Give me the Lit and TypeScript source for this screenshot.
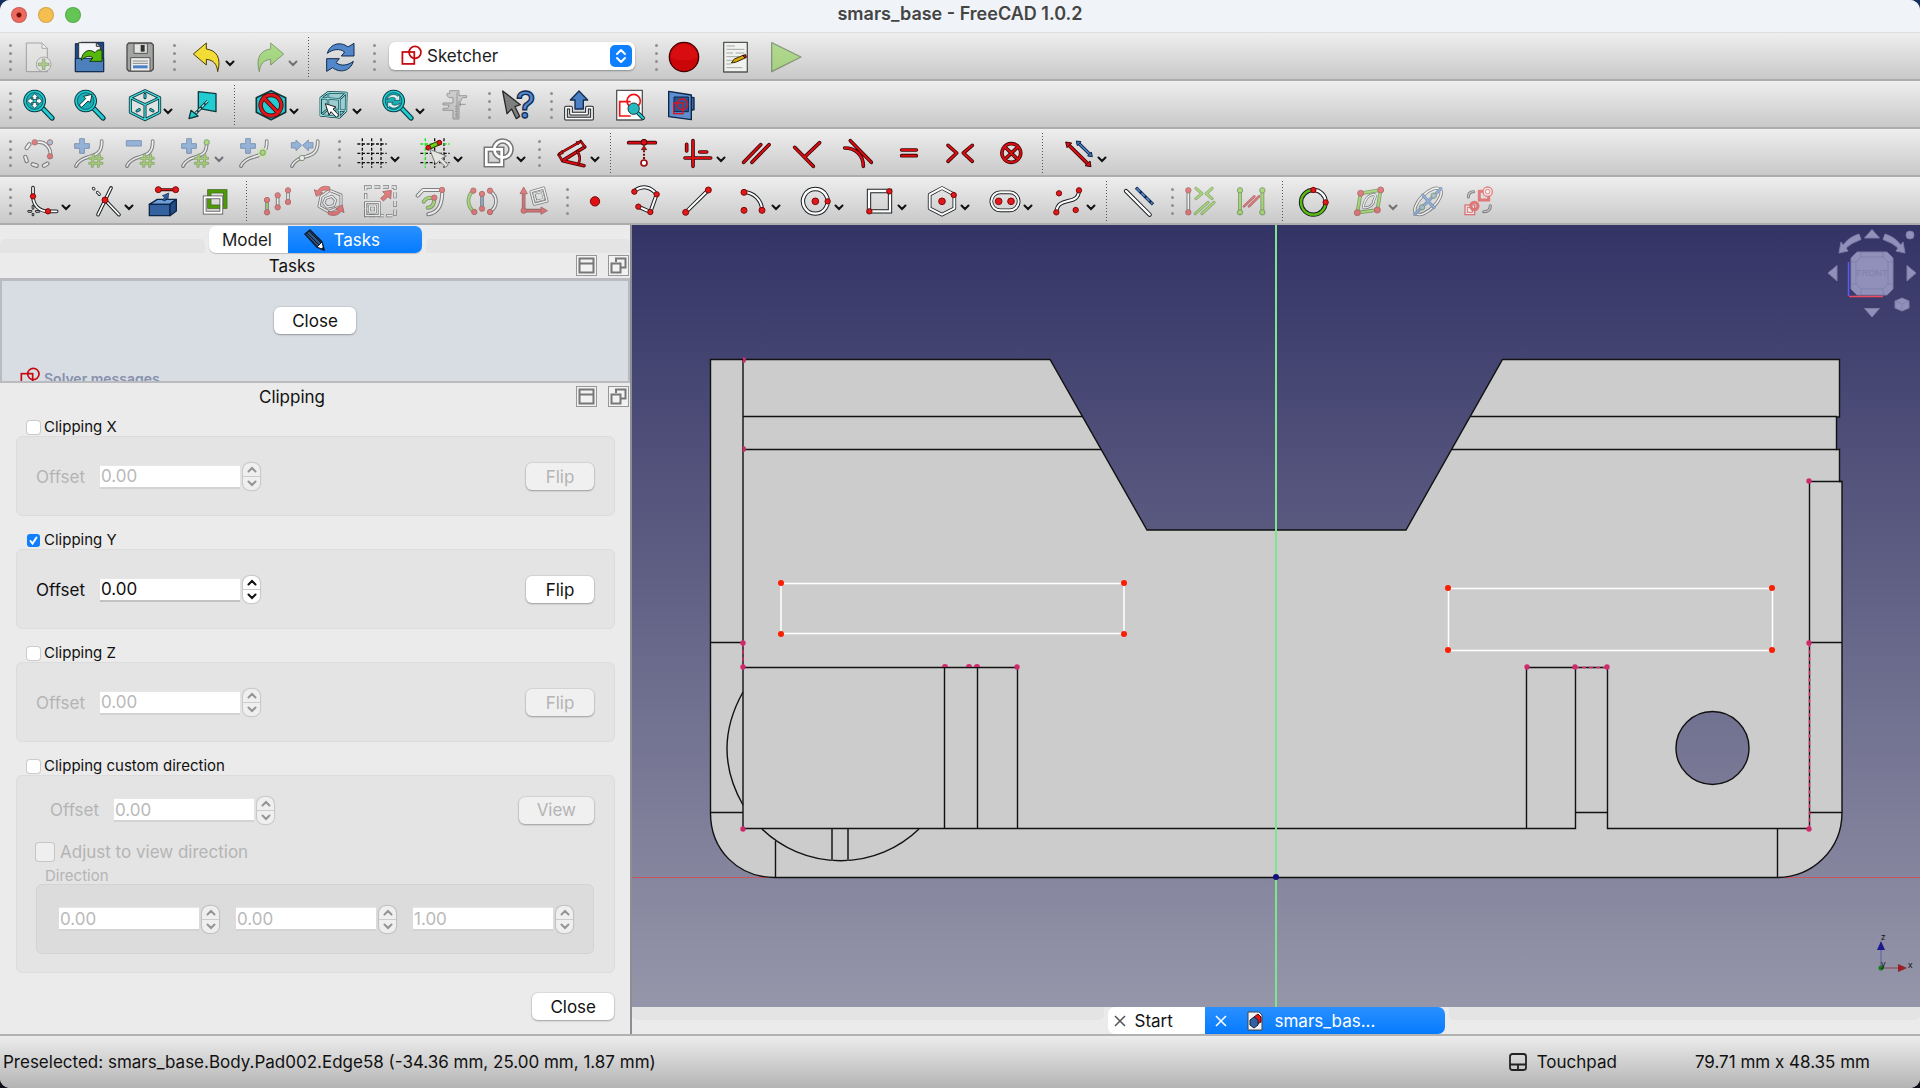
import { LitElement, html, svg, css, nothing, type TemplateResult } from "lit";
import { customElement, property } from "lit/decorators.js";

type Art = TemplateResult | TemplateResult[];

const RED = "#e3181b";
const GREEN = "#73d216";
const BLUE = "#4a86cf";
const TEAL = "#1fcdd3";
const INK = "#1b2023";

/* Outlined stroke: a dark line with a lighter core. */
const tube = (d: string, core = "#fff", w = 11, inner = 5, ink = INK) => svg`
  <path d=${d} fill="none" stroke=${ink} stroke-width=${w} stroke-linecap="round" stroke-linejoin="round"/>
  <path d=${d} fill="none" stroke=${core} stroke-width=${inner} stroke-linecap="round" stroke-linejoin="round"/>`;
const shape = (d: string, fill: string, ink = INK, w = 3) =>
  svg`<path d=${d} fill=${fill} stroke=${ink} stroke-width=${w} stroke-linejoin="round"/>`;
const dot = (x: number, y: number, fill = RED, r = 8) =>
  svg`<circle cx=${x} cy=${y} r=${r} fill=${fill} stroke="#7c0a0a" stroke-width="3"/>`;
const gdot = (x: number, y: number, fill = GREEN, r = 8) =>
  svg`<circle cx=${x} cy=${y} r=${r} fill=${fill} stroke="#2c5a10" stroke-width="3"/>`;
const bar = (d: string, core = "#dc0d12") => tube(d, core, 11, 6, "#3a0606");
const HEX = "M48 5L92 26V70L48 92L4 70V26Z";

const lens = (inner: Art) => svg`
  ${tube("M64 60L90 87", TEAL, 16, 9, "#0d3b40")}
  ${tube("M38 8A28 28 0 1 1 37.900 8Z", TEAL, 12, 6, "#0d3b40")}
  <circle cx="38" cy="36" r="25" fill="#19aeb6" stroke="#0d5157" stroke-width="2"/>
  ${inner}`;
const plus = (x: number, y: number) =>
  shape(`M${x - 7} ${y - 22}h14v15h15v14h-15v15h-14v-15h-15v-14h15z`, BLUE, "#204a87");
const hash = (x: number, y: number) =>
  tube(`M${x - 8} ${y - 17}L${x - 11} ${y + 17}M${x + 10} ${y - 17}L${x + 7} ${y + 17}M${x - 19} ${y - 7}H${x + 18}M${x - 19} ${y + 8}H${x + 18}`, "#73c020", 9, 5, "#3d6b12");
const curve = () => tube("M86 12C88 50 66 54 46 60S14 74 9 87", "#fff");
const grid = (first = "#111") => svg`
  <g fill="none" stroke="#111" stroke-width="4" stroke-dasharray="9 5">
    <path d="M47 4V92M75 4V92M4 49H92M4 77H92"/>
    <path d="M19 4V92M4 21H92" stroke=${first}/>
  </g>`;
const sketchMark = svg`
  <g fill="none" stroke="#c8070c" stroke-width="5">
    <rect x="4" y="20" width="34" height="34"/><circle cx="40" cy="21" r="17"/>
  </g>`;

const ICONS: Record<string, Art> = {
  newDoc: svg`${shape("M13 6H60L76 22V92H13Z", "#e8e9e6", "#666")}${shape("M60 6V22H76Z", "#fff", "#777")}
    <circle cx="65" cy="70" r="22" fill="#eee" stroke="#777" stroke-width="3"/>${shape("M61 54h8v12h12v8h-12v12h-8v-12h-12v-8h12z", "#8ac04a", "#3d6b12", 2)}`,
  open: svg`${shape("M7 8H24V4H92V92H7Z", "#204a87", "#0d2547")}${shape("M17 5H70L82 16V56H17Z", "#f3f5f8", "#333")}
    ${shape("M70 5V16H82Z", "#cfd3d8", "#333")}
    ${shape("M7 52H92V92H7Z", "#4c80bd", "#0d2547")}${shape("M25 58C27 32 48 20 66 35L74 27H87V61H50L60 51C50 42 36 46 25 58Z", "#57b80c", "#173b04")}`,
  save: svg`${shape("M14 6H82L88 12V84L82 90H14L9 84V12Z", "#a3a5a2", "#4c4e4c", 4)}${shape("M30 8H70V37H30Z", "#e4e4e2", "#555")}<rect x="50" y="12" width="12" height="20" fill="#333"/>
    ${shape("M20 50H78V90H20Z", "#eceeec", "#555")}<path d="M26 60H72M26 67H72" stroke="#888" stroke-width="3"/><rect x="27" y="73" width="44" height="9" fill="#4c80c9"/>`,
  undo: shape("M7 39L46 6V24C76 28 92 50 80 92C78 70 68 57 46 55V72Z", "#f2dc35", "#4a3f05"),
  redo: shape("M89 39L50 6V24C20 28 4 50 16 92C18 70 28 57 50 55V72Z", "#73d22c", "#2c5a10"),
  refresh: svg`${shape("M10 37C18 8 50 0 72 18L90 7V45H52L62 33C46 21 26 25 10 37Z", "#5288c9", "#122b50")}
    <g transform="rotate(180 49 49)">${shape("M10 37C18 8 50 0 72 18L90 7V45H52L62 33C46 21 26 25 10 37Z", "#5288c9", "#122b50")}</g>`,
  record: svg`<circle cx="48" cy="48" r="44" fill="#cb0609" stroke="#400" stroke-width="4"/><path d="M8 50A40 40 0 0 1 88 50Q48 66 8 50Z" fill="#e01216" opacity=".6"/>`,
  macro: svg`${shape("M14 4H85V93H14Z", "#f0f2ef", "#555853", 4)}<path d="M22 15H48M22 25H76M22 36H42M50 36H76M22 47H60M22 58H46M22 69H36M22 80H70" stroke="#a5a8a3" stroke-width="3"/>
    ${shape("M37 66L46 54L72 43L78 51L52 63Z", "#d9a90c", "#332600")}${shape("M72 43L80 41L82 49L78 51Z", "#d2362b", "#300")}`,
  play: shape("M5 5L93 48L5 92Z", "#7ed13a", "#38561f", 4),
  zoomFit: lens(svg`${shape("M38 14L48 25H43V31H49V26L60 36L49 46V41H43V47H48L38 58L28 47H33V41H27V46L16 36L27 26V31H33V25H28Z", "#fff", "#12363a", 2)}<rect x="33" y="31" width="10" height="10" fill=${TEAL} stroke="#12363a" stroke-width="2"/>`),
  zoomSel: lens(shape("M19 48L38 29L32 22L57 16L52 41L45 36L26 55Z", "#fff", "#12363a")),
  iso: svg`${shape(HEX, "#dde3e3", "#12363a")}${tube(`${HEX}M6 27L48 47L90 27M48 47V90`, "#3ed7dc", 9, 4, "#12363a")}
    ${tube("M48 16V26M24 66L31 62M65 62L72 66", TEAL, 9, 4, "#12363a")}`,
  align: svg`${shape("M34 8L87 14V68L34 58Z", TEAL, "#12363a", 4)}<path d="M62 36L26 73" stroke="#12363a" stroke-width="9"/><path d="M62 36L26 73" stroke="#8fe9eb" stroke-width="4" stroke-dasharray="10 5"/>${shape("M6 89L12 64L33 81Z", TEAL, "#12363a", 4)}`,
  drawStyle: svg`${shape(HEX, TEAL, "#12363a", 5)}${tube("M48 18A31 31 0 1 1 47.900 18ZM26 26L70 72", "#dc161b", 13, 9, "#380404")}`,
  boxSel: svg`${shape("M8 27L30 9L86 11L84 66L64 86L8 80Z", "#9ccdd0", "#12363a", 4)}${tube("M8 27L30 10L85 12L84 66L64 85L8 79ZM8 27L64 31L85 12M64 31V85M30 10V60L8 79M30 60L84 66", "#9be8ea", 7, 3, "#12454a")}
    ${shape("M22 44L54 54L45 60L62 78L55 85L39 68L33 78Z", "#fff", "#222")}`,
  zoomSync: lens(svg`${shape("M18 32C22 16 42 12 50 22L56 17V34H40L44 29C36 22 26 26 18 32Z", "#d6f6f6", "#12363a", 2)}<g transform="rotate(180 38 37)">${shape("M18 32C22 16 42 12 50 22L56 17V34H40L44 29C36 22 26 26 18 32Z", "#d6f6f6", "#12363a", 2)}</g>`),
  caliper: svg`${shape("M32 5H60V20H83V26H70L64 38H60V90H42V64H12V58H26L31 48H12V42H42V26H30L24 20V14H32Z", "#b4b5b3", "#555")}<path d="M54 10V86M48 52H56M48 60H56M48 68H56M48 76H56M48 84H56M60 46H80M64 52V40" stroke="#555" stroke-width="3"/>`,
  whats: svg`${shape("M5 6L58 47L42 53L56 82L46 89L32 60L18 74Z", "#7d7f7c", "#2a2a2a", 4)}
    <text x="74" y="88" text-anchor="middle" font-family="Inter, sans-serif" font-weight="500" font-size="112" fill="#5089d0" stroke="#122b50" stroke-width="4">?</text>`,
  leave: svg`${tube("M24 56H9V89H87V56H72V74H24Z", "#fff", 11, 5)}${shape("M48 6L74 33H61V60H36V33H22Z", "#4b80c2", "#122b50", 4)}`,
  viewSketch: svg`${shape("M8 4H85V93H8Z", "#fff", "#555", 4)}<g fill="none" stroke="#f01418" stroke-width="5"><path d="M50 38H17V81H50"/><circle cx="59" cy="36" r="20"/></g>
    ${tube("M70 70L87 87", TEAL, 12, 6, "#12363a")}<circle cx="59" cy="59" r="17" fill="#28b9bf" stroke="#12363a" stroke-width="3"/>`,
  section: svg`${shape("M72 24L87 26V62L72 66Z", "#4069a8", "#0d2547", 4)}${shape("M11 7L79 18V92L11 83Z", "#5d8fd0", "#0d2547", 4)}${shape("M27 24H70V68H27Z", "#2d5493", "#0d2547")}
    <g fill="none" stroke="#e0141a" stroke-width="4"><rect x="26" y="42" width="28" height="32"/><circle cx="52" cy="46" r="16"/></g>`,

  bsDegree: svg`${tube("M46 16A34 34 0 0 1 84 58", "#fff")}${tube("M14 33L22 22M10 60L14 72M32 82L44 86M66 86L76 80", "#fff", 13, 7)}${dot(38, 16)}${dot(84, 58)}${dot(84, 16, "#729fcf")}`,
  degUp: svg`${curve()}${plus(27, 27)}${hash(69, 71)}`,
  degDown: svg`${curve()}${shape("M7 11H52V27H7Z", BLUE, "#204a87")}${hash(70, 71)}`,
  knotUp: svg`${tube("M80 18C80 50 66 54 46 60S14 74 9 87", "#fff")}${plus(27, 27)}${hash(65, 71)}${gdot(80, 16)}`,
  knotIns: svg`${curve()}${plus(30, 27)}<circle cx="74" cy="47" r="15" fill="#b5f27a" opacity=".8"/>${gdot(74, 47)}`,
  join: svg`${curve()}${shape("M7 17H21V9L38 25L21 41V33H7ZM72 17H58V9L41 25L58 41V33H72Z", BLUE, "#204a87")}${gdot(39, 63, "#fff")}`,
  grid: grid(),
  snap: svg`${grid("#1fe01f")}${tube("M28 32L61 17", GREEN, 15, 9, "#173b04")}${dot(28, 32, "#e3181b", 7)}${dot(61, 17, "#e3181b", 7)}${shape("M32 37L82 57L68 64L88 84L80 90L60 71L50 82Z", "#e4e5e0", "#777")}`,
  order: svg`<g fill="none" stroke="#777" stroke-width="17"><rect x="13" y="37" width="46" height="46"/><circle cx="62" cy="37" r="25"/></g><g fill="none" stroke="#fff" stroke-width="8"><rect x="13" y="37" width="46" height="46"/><circle cx="62" cy="37" r="25"/></g>`,
  dimension: svg`${bar("M86 30L20 71L84 86")}${tube("M64 44Q76 60 68 80", "#dc0d12", 8, 4, "#3a0606")}${tube("M8 53L18 70M74 12L87 30M10 50L73 14", "#dc0d12", 8, 4, "#3a0606")}${shape("M5 55L18 40L22 50ZM76 12L60 14L66 24Z", "#dc0d12", "#3a0606", 2)}`,
  pointOn: svg`${bar("M8 17H88")}<circle cx="54" cy="16" r="9" fill="#dc0d12" stroke="#3a0606" stroke-width="3"/><path d="M54 66V38" stroke="#7a0a0a" stroke-width="6" stroke-dasharray="6 4"/>${shape("M54 26L62 38H46Z", "#dc0d12", "#3a0606", 2)}<circle cx="54" cy="78" r="9" fill="#fff" stroke="#a00a0e" stroke-width="5"/>`,
  horVer: svg`${bar("M33 11V88M9 63H86M14 22V42M53 45H74")}`,
  parallel: bar("M11 76L62 23M36 76L87 23"),
  perp: bar("M86 17L42 59M11 31L67 88"),
  tangent: bar("M25 11L88 76M8 33C40 33 64 54 64 88"),
  equal: tube("M26 39H70M26 56H70", "#dc0d12", 11, 6, "#3a0606"),
  symm: bar("M12 25L38 48L12 73M85 25L58 48L85 73"),
  block: bar("M49 20A28 28 0 1 1 48.900 20ZM30 30L68 67M68 30L30 67"),
  toggle: svg`${bar("M16 23L76 82")}${shape("M8 15L26 18L12 32ZM84 89L66 86L81 72Z", "#dc0d12", "#3a0606")}${tube("M46 18L81 52", "#4b7ec2", 10, 5, "#0d2547")}${shape("M40 12L54 14L43 26ZM88 59L74 57L85 45Z", "#4b7ec2", "#0d2547")}`,

  fillet: svg`${tube("M18 8V34C18 60 36 79 63 79H89", "#fff")}${tube("M5 79H12M28 79H36M18 63V70M18 88V90", "#bbb", 8, 3)}${dot(18, 34)}${dot(63, 79)}`,
  trim: svg`${tube("M63 9L24 89M45 45L87 89", "#fff")}${tube("M10 10L12 12M22 22L28 28", "#fff", 9, 4)}${dot(45, 45, RED, 9)}`,
  external: svg`${shape("M4 58L28 43H85L66 58Z", "#6e9fdb", "#0d2547", 4)}${shape("M4 58H66V92H4Z", "#34619f", "#0d2547", 4)}${shape("M66 58L85 43V78L66 92Z", "#234b84", "#0d2547", 4)}
    ${tube("M31 14H82", RED, 9, 4, "#3a0606")}${dot(31, 14, RED, 9)}${dot(83, 14, RED, 9)}${shape("M44 46L50 36L43 32L62 24L60 44L54 39L52 48Z", "#34619f", "#0d2547", 2)}`,
  carbon: svg`<rect x="31" y="19" width="48" height="46" fill="none" stroke="#24480c" stroke-width="12"/><rect x="31" y="19" width="48" height="46" fill="none" stroke="#4e9a06" stroke-width="9"/>
    <rect x="17" y="37" width="50" height="46" fill="none" stroke="#555" stroke-width="11"/><rect x="17" y="37" width="50" height="46" fill="none" stroke="#fff" stroke-width="6"/>`,
  move: svg`${tube("M15 45V82", GREEN)}${tube("M47 31V67M78 16V51", "#fff")}${dot(15, 45)}${dot(15, 82)}${dot(47, 31)}${dot(47, 67)}${dot(78, 16)}${dot(78, 51)}`,
  rotate: svg`${tube("M24 34L50 16L84 30V64L46 80L18 64Z", "#fff", 9, 4)}${tube("M38 40L56 34L68 46L62 62L42 66L32 54Z", "#fff", 9, 4)}
    ${shape("M50 6C32 0 18 8 14 18L4 14L10 34L30 24L22 22C28 14 38 14 50 18Z", RED, "#7c0a0a")}${shape("M46 88C64 96 80 88 84 78L93 83L88 60L68 72L76 74C70 82 60 82 46 78Z", RED, "#7c0a0a")}`,
  scale: svg`<rect x="5" y="6" width="88" height="86" fill="none" stroke=${INK} stroke-width="10" stroke-dasharray="18 8"/><rect x="5" y="6" width="88" height="86" fill="none" stroke="#fff" stroke-width="5" stroke-dasharray="16 10"/>
    ${tube("M5 52H46V92H5ZM16 63H35V81H16Z", "#fff", 8, 4)}${shape("M50 40L64 28L56 20L82 16L80 42L72 35L58 48Z", RED, "#7c0a0a")}`,
  offset: svg`${tube("M8 32L24 15H82C82 58 72 82 40 88", "#fff", 12, 6)}${tube("M26 50C34 36 46 38 58 38C58 58 52 68 38 68", GREEN, 12, 6, "#2c5a10")}${dot(81, 15)}${dot(58, 38)}`,
  mirror: svg`${tube("M22 17C2 34 2 64 25 81", GREEN, 11, 6, "#2c5a10")}${tube("M72 17C96 34 96 64 72 81", "#fff")}${tube("M48 27V71", BLUE)}${dot(22, 17)}${dot(25, 81)}${dot(48, 27)}${dot(48, 71)}${dot(72, 17)}${dot(72, 81)}`,
  axes: svg`${tube("M42 20L80 9L90 48L52 58Z", "#fff", 9, 4)}${tube("M52 26L75 20L81 42L58 48Z", "#fff", 6, 3)}${bar("M20 24V77H74")}${shape("M20 6L31 26H9ZM91 77L72 88V66Z", RED, "#7c0a0a")}${dot(20, 77)}`,
  point: dot(48, 49, "#dd1013", 14),
  polyline: svg`${tube("M13 18C36 0 62 4 80 28L61 81L25 65", "#fff", 12, 6)}${dot(13, 20)}${dot(80, 28)}${dot(61, 81)}${dot(25, 65)}`,
  line: svg`${tube("M14 82L82 15", "#fff", 12, 6)}${dot(14, 82, RED, 9)}${dot(82, 15, RED, 9)}`,
  arc: svg`${tube("M21 22A54 54 0 0 1 75 76", "#fff", 12, 6)}${dot(21, 22, RED, 9)}${dot(75, 76, RED, 9)}${dot(21, 76, RED, 9)}`,
  circle: svg`${tube("M46 12A37 37 0 1 1 45.900 12Z", "#fff", 13, 7)}${dot(46, 49, RED, 10)}${dot(83, 49)}`,
  rect: svg`<path d="M18 18H81V79H18Z" fill="none" stroke=${INK} stroke-width="13"/><path d="M18 18H81V79H18Z" fill="none" stroke="#fff" stroke-width="7"/>${dot(79, 19)}${dot(19, 79)}`,
  hexagon: svg`${tube("M48 9L85 29V70L48 89L11 70V29Z", "#fff", 11, 6)}${dot(48, 49, RED, 10)}${dot(83, 30)}`,
  slot: svg`${tube("M34 22H62A27 27 0 0 1 62 76H34A27 27 0 0 1 34 22Z", "#fff", 11, 6)}${dot(29, 49, RED, 10)}${dot(66, 49, RED, 10)}`,
  bspline: svg`${tube("M13 82C16 30 80 66 81 16", "#fff", 12, 6)}${dot(13, 82)}${dot(81, 16)}${dot(21, 25)}${dot(71, 75)}`,
  construct: svg`${tube("M12 18L83 89", "#fff", 13, 7)}<path d="M42 8L93 58" stroke="#0d2547" stroke-width="10"/><path d="M44 10L91 56" stroke="#4b7ec2" stroke-width="6" stroke-dasharray="14 6"/>`,
  selCons: svg`${tube("M13 16V82", "#fff")}${dot(13, 16)}${dot(13, 82)}${tube("M36 10L54 26L36 41M84 10L67 26L84 41M34 86L72 52M54 86L90 52", "#73d216", 9, 5, "#3d6b12")}`,
  selElem: svg`${tube("M15 16V82M82 16V82", GREEN, 12, 6, "#3d6b12")}${gdot(15, 16)}${gdot(15, 82)}${gdot(82, 16)}${gdot(82, 82)}${tube("M27 64L58 34M42 64L72 34", RED, 8, 4, "#7c0a0a")}`,
  ring: svg`${tube("M46 15A37 37 0 1 0 83 52", "#5bbd14", 13, 7)}${tube("M46 15A37 37 0 0 1 83 52", "#fff", 13, 7)}${dot(46, 15)}${dot(83, 52)}`,
  polyCtrl: svg`${tube("M20 25L80 15L70 75L10 83Z", GREEN, 11, 6, "#2c5a10")}${tube("M28 68C30 44 44 28 62 28C70 36 56 44 58 54C50 66 40 70 28 68Z", "#fff", 8, 4)}${dot(20, 25, RED, 9)}${dot(80, 15, RED, 9)}${dot(70, 75, RED, 9)}${dot(10, 83, RED, 9)}`,
  ellipse: svg`<g transform="rotate(-45 48 49)">${tube("M-3 49A51 23 0 1 1 99 49A51 23 0 1 1 -3 49Z", "#fff", 10, 5)}</g>${tube("M8 88L87 11M32 30L66 68", BLUE, 9, 5, "#204a87")}${gdot(30, 67, "#729fcf")}${gdot(65, 32, "#729fcf")}`,
  swap: svg`<rect x="49" y="19" width="28" height="26" fill="none" stroke=${RED} stroke-width="9"/><circle cx="74" cy="20" r="14" fill="#fff" stroke=${RED} stroke-width="4"/><circle cx="74" cy="20" r="7" fill="none" stroke=${RED} stroke-width="3"/>
    <rect x="6" y="60" width="29" height="29" fill="#fff" stroke=${RED} stroke-width="4"/><rect x="13" y="67" width="15" height="15" fill="none" stroke=${RED} stroke-width="3"/><circle cx="34" cy="63" r="11" fill="none" stroke=${RED} stroke-width="9"/>
    ${tube("M16 36C16 24 22 20 32 20M82 62C82 74 76 80 62 80", "#aaa", 9, 4)}`,
};

interface Tool { icon: string; label: string; menu?: boolean; off?: boolean; }
type Item = Tool | "grip" | "sep" | "workbench";
const t = (icon: string, label: string, off = false): Tool => ({ icon, label, off });
const m = (icon: string, label: string, off = false): Tool => ({ icon, label, off, menu: true });

const TOOLBARS: Item[][] = [
  ["grip", t("newDoc", "New", true), t("open", "Open"), t("save", "Save"), "grip", m("undo", "Undo"), m("redo", "Redo", true), "sep", t("refresh", "Refresh"),
    "grip", "workbench", "grip", t("record", "Record macro"), t("macro", "Macros"), t("play", "Run macro", true)],
  ["grip", t("zoomFit", "Fit all"), t("zoomSel", "Fit selection"), m("iso", "Standard views"), t("align", "Align to selection"), "sep", m("drawStyle", "Draw style"), m("boxSel", "Box selection"), m("zoomSync", "Sync view"), t("caliper", "Measure", true),
    "grip", t("whats", "What's this"), "grip", t("leave", "Leave sketch"), t("viewSketch", "View sketch"), t("section", "View section")],
  ["grip", t("bsDegree", "Convert to B-spline", true), t("degUp", "Increase degree", true), t("degDown", "Decrease degree", true), m("knotUp", "Knot multiplicity", true), t("knotIns", "Insert knot", true), t("join", "Join curves", true),
    "grip", m("grid", "Toggle grid"), m("snap", "Toggle snap"), m("order", "Rendering order"), "grip", m("dimension", "Dimension"), "sep",
    t("pointOn", "Coincident"), m("horVer", "Horizontal or vertical"), t("parallel", "Parallel"), t("perp", "Perpendicular"), t("tangent", "Tangent"), t("equal", "Equal"), t("symm", "Symmetric"), t("block", "Block"), "sep", m("toggle", "Toggle driving")],
  ["grip", m("fillet", "Fillet"), m("trim", "Trim"), t("external", "External geometry"), t("carbon", "Carbon copy"), "sep",
    t("move", "Translate", true), t("rotate", "Rotate", true), t("scale", "Scale", true), t("offset", "Offset", true), t("mirror", "Symmetry", true), t("axes", "Remove axes alignment", true),
    "grip", t("point", "Point"), t("polyline", "Polyline"), t("line", "Line"), m("arc", "Arc"), m("circle", "Circle"), m("rect", "Rectangle"), m("hexagon", "Polygon"), m("slot", "Slot"), m("bspline", "B-spline"), "sep", t("construct", "Construction geometry"),
    "grip", t("selCons", "Select constraints", true), t("selElem", "Select elements", true), "sep", t("ring", "Internal geometry"), m("polyCtrl", "Control polygon", true), t("ellipse", "Ellipse axes", true), t("swap", "Switch space", true)],
];

@customElement("tool-strip")
export class ToolStrip extends LitElement {
  @property({ attribute: false }) items: Item[] = [];

  static styles = css`
    :host { display: flex; align-items: center; height: 48px; padding: 2px 0 0 1px; box-sizing: border-box;
      background: linear-gradient(#eee, #c9c9c9); border-bottom: 2px solid #adadad; }
    .tool { appearance: none; border: 0; background: none; padding: 0; width: 51px; height: 44px; flex: none;
      display: flex; align-items: center; justify-content: center; }
    .menu { width: 63px; padding-left: 15px; gap: 2px; justify-content: flex-start; }
    .glyph { width: 32px; height: 32px; flex: none; overflow: visible; display: block; }
    .off { opacity: 0.5; }
    .caret { width: 10px; height: 7px; margin-top: 12px; flex: none; }
    .grip { width: 11px; flex: none; display: flex; flex-direction: column; align-items: flex-end; gap: 5px; box-sizing: border-box; }
    .grip i { width: 3px; height: 3px; border-radius: 50%; background: #8f8f8f; }
    .sep { width: 12px; height: 41px; flex: none; display: flex; justify-content: center; }
    .sep::before { content: ""; width: 1px; background: repeating-linear-gradient(#555 0 1px, transparent 1px 3px); }
    .bench { position: relative; width: 246px; height: 28px; margin: 0 12px 2px 13px; flex: none; }
    .bench select { appearance: none; width: 100%; height: 100%; border: 0; border-radius: 6px; background: #fff; padding: 0 30px 0 38px;
      box-shadow: 0 1px 2px #0005; color: #1c1c1c; font: 17px Inter, "Liberation Sans", sans-serif; }
    .mark { position: absolute; left: 12px; top: 3px; width: 21px; height: 21px; }
    .updown { position: absolute; right: 3px; top: 3px; width: 22px; height: 22px; pointer-events: none; }
  `;

  private tool(x: Tool) {
    return html`<button class="tool ${x.menu ? "menu" : ""} ${x.off ? "off" : ""}" ?disabled=${x.off} aria-label=${x.label}>
      <svg class="glyph" viewBox="0 0 96 96" aria-hidden="true">${ICONS[x.icon]}</svg>
      ${x.menu ? html`<svg class="caret" viewBox="0 0 10 7" aria-hidden="true"><path d="M1.500 1.500L5 5L8.500 1.500" fill="none" stroke="#111" stroke-width="2" stroke-linecap="round"/></svg>` : nothing}
    </button>`;
  }

  render() {
    return this.items.map((it) => {
      if (it === "grip") return html`<span class="grip"><i></i><i></i><i></i><i></i></span>`;
      if (it === "sep") return html`<span class="sep"></span>`;
      if (it === "workbench") return html`<div class="bench">
        <select aria-label="Workbench"><option>Sketcher</option></select>
        <svg class="mark" viewBox="0 0 60 60">${sketchMark}</svg>
        <svg class="updown" viewBox="0 0 22 22"><rect width="22" height="22" rx="5" fill="#0f7fff"/><path d="M7 9L11 5L15 9M7 13L11 17L15 13" fill="none" stroke="#fff" stroke-width="2" stroke-linecap="round" stroke-linejoin="round"/></svg>
      </div>`;
      return this.tool(it);
    });
  }
}

@customElement("spin-box")
export class SpinBox extends LitElement {
  @property() value = "0.00";
  @property() label = "";
  @property({ type: Boolean }) off = false;

  static styles = css`
    :host { display: flex; align-items: center; gap: 3px; }
    .field { width: 140px; height: 24px; box-sizing: border-box; border: 0; border-top: 1px solid #e6e6e6; border-bottom: 2px solid #c2c2c2; border-radius: 0;
      padding: 0 1px; background: #fff; color: #111; font: 17px Inter, "Liberation Sans", sans-serif; }
    .field:disabled { color: #b9b9b9; border-bottom-color: #d3d3d3; }
    .steps { display: flex; flex-direction: column; width: 17px; height: 27px; border-radius: 7px; overflow: hidden; background: #fff; box-shadow: 0 0 1px 1px #0002; }
    .step { appearance: none; border: 0; background: none; flex: 1; padding: 0; display: flex; align-items: center; justify-content: center; }
    .step + .step { border-top: 1px solid #ccc; }
    .step svg { width: 10px; height: 7px; }
    .dim { background: #efefef; }
    .dim svg { opacity: 0.4; }
  `;

  render() {
    return html`<input class="field" aria-label=${this.label} .value=${this.value} ?disabled=${this.off}>
      <span class="steps ${this.off ? "dim" : ""}">
        <button class="step" aria-label="Increase" ?disabled=${this.off}><svg viewBox="0 0 10 7"><path d="M1.500 5.500L5 2L8.500 5.500" fill="none" stroke="#111" stroke-width="2" stroke-linecap="round"/></svg></button>
        <button class="step" aria-label="Decrease" ?disabled=${this.off}><svg viewBox="0 0 10 7"><path d="M1.500 1.500L5 5L8.500 1.500" fill="none" stroke="#111" stroke-width="2" stroke-linecap="round"/></svg></button>
      </span>`;
  }
}

const pinkDots: [number, number][] = [[743, 643], [743, 667], [1017, 667], [743, 829],
  [1809, 481], [1809, 643], [1809, 829], [1527, 667], [1575, 667], [1607, 667]];
/* Vertices half hidden by the face in front of them. */
const upperHalves = [945, 969, 977];
const rightHalves = [360, 449];
const redDots: [number, number][] = [[781, 583], [1124, 583], [781, 634], [1124, 634], [1448, 588], [1772, 588], [1448, 650], [1772, 650]];

@customElement("model-view")
export class ModelView extends LitElement {
  static styles = css`
    :host { display: block; min-height: 0; background: linear-gradient(#333366, #9696aa); overflow: hidden; }
    .scene { width: 100%; height: 100%; display: block; }
    .axis { font: 9px "Liberation Sans", sans-serif; fill: #111; }
    .face { font: 9px "Liberation Sans", sans-serif; fill: #7f7fa8; }
  `;

  render() {
    return html`<svg class="scene" viewBox="632 225 1288 782" preserveAspectRatio="xMidYMin meet" role="img" aria-label="Front view of the clipped body">
      <path d="M632 877.500H1920" stroke="#c9565f" stroke-width="1"/>
      <path fill="#ccc" fill-rule="evenodd" stroke="#111" stroke-width="1.400" d="M710.500 359.500H1050L1147 530H1406L1502.500 359.500H1839.500V417H1836.500V449.500H1839.500V481.500H1842V812.500C1842 850 1812 877.500 1777 877.500H775C738 877.500 710.500 850 710.500 813Z
        M1749 748A36.500 36.500 0 1 0 1676 748A36.500 36.500 0 1 0 1749 748Z"/>
      <g fill="none" stroke="#111" stroke-width="1.400">
        <path d="M743 359.500V643M743 667V828.500M743 416.500H1083M743 449.500H1101M1471 416.500H1837M1452 449.500H1837"/>
        <path d="M710.500 642.500H743M710.500 812.500H743M743 692Q711 749 743 805"/>
        <path d="M743 667.500H1017.500V828.500M944.500 667V828.500M977.500 667V828.500M743 828.500H1575.500V667.500M1575.500 667.500H1526.500V828.500M1607.500 667V828.500H1809"/>
        <path d="M1575.500 812.500H1607.500M1809.500 643V481.500H1842M1809.500 642.500H1842M1809.500 812.500H1842M1777.500 828.500V877M775.500 841V877"/>
        <path d="M762 829A113 113 0 0 0 919 829"/>
        <path d="M832 829V861M848 829V861" stroke="#444" stroke-width="2"/>
      </g>
      <g fill="none" stroke="#111" stroke-width="1.400"><path d="M743 643V667M1809.500 643V829M1575 667.500H1607"/></g>
      <g fill="none" stroke="#d6246b" stroke-width="1.400" stroke-dasharray="4 3"><path d="M743 643V667M1809.500 643V829M1575 667.500H1607"/></g>
      ${pinkDots.map(([x, y]) => svg`<circle cx=${x} cy=${y} r="2.700" fill="#cf2a6c"/>`)}
      ${upperHalves.map((x) => svg`<path d="M${x - 3} 667A3 3 0 0 1 ${x + 3} 667Z" fill="#cf2a6c"/>`)}
      ${rightHalves.map((y) => svg`<path d="M743 ${y - 3}A3 3 0 0 1 743 ${y + 3}Z" fill="#cf2a6c"/>`)}
      <path d="M781 583.500H1124V633.500H781ZM1448.500 588.500H1772.500V650.500H1448.500Z" fill="none" stroke="#fff" stroke-width="1.500"/>
      ${redDots.map(([x, y]) => svg`<circle cx=${x} cy=${y} r="3" fill="#fb1e02"/>`)}
      <path d="M1276 225V1007" stroke="#7ce58e" stroke-width="2"/>
      <circle cx="1276" cy="877" r="3" fill="#10107c"/>

      <g fill="#9090bb" stroke="#7c7ca6" stroke-width="1">
        <path d="M1872 229.500L1879.500 238H1864.500ZM1872 317L1879.500 308.500H1864.500ZM1828 273L1837 265.500V281ZM1916 273L1907 265.500V281Z"/>
        <path d="M1859 234L1861 239.500Q1851 243 1846 248L1848 251L1839 253L1841 242L1843 245Q1849 237 1859 234Z"/>
        <path d="M1885 234L1883 239.500Q1893 243 1898 248L1896 251L1905 253L1903 242L1901 245Q1895 237 1885 234Z"/>
        <circle cx="1910" cy="235" r="4"/>
        <path d="M1902 298L1909 301V308L1902 311L1895 308V301Z"/>
        <path d="M1857 252H1887L1893 258V289L1887 295H1857L1851 289V258Z"/>
      </g>
      <path d="M1895 301L1902 304L1909 301M1902 304V311M1861 257H1883L1888 262V284L1883 289H1861L1856 284V262ZM1861 252V257M1883 252V257M1861 289V295M1883 289V295M1851 262H1856M1851 284H1856M1888 262H1893M1888 284H1893" fill="none" stroke="#8181ad" stroke-width="1"/>
      <text class="face" x="1872" y="276" text-anchor="middle">FRONT</text>
      <path d="M1848.500 262V296" stroke="#5a5af2" stroke-width="1.500"/><path d="M1849 296.500H1883" stroke="#ee4a62" stroke-width="1.500"/>

      <path d="M1881 966V948" stroke="#5e5ea8"/><path d="M1881 941L1885 950H1877Z" fill="#1a1a8c"/>
      <path d="M1882 968H1899" stroke="#8c4350"/><path d="M1907 968L1898 964V972Z" fill="#962022"/><circle cx="1881" cy="968" r="2.500" fill="#157a1a"/>
      <text class="axis" x="1881" y="940">z</text><text class="axis" x="1908" y="968">x</text><text class="axis" x="1881" y="967">y</text>
    </svg>`;
  }
}

@customElement("app-root")
export class AppRoot extends LitElement {
  static styles = css`
    :host { display: block; background: linear-gradient(#12305a 20px, #0d1016 60px); color: #111; font: 17px/20px Inter, "Liberation Sans", sans-serif; }
    .window { display: flex; flex-direction: column; min-height: 100vh; border-radius: 10px; overflow: hidden; background: #ebebeb; }
    .title { position: relative; height: 33px; box-sizing: border-box; border-bottom: 1px solid #dcdfe2; background: #f0f4f8; display: flex; align-items: center; justify-content: center; }
    .title h1 { margin: 0 0 4px; font-size: 18px; line-height: 20px; font-weight: 600; color: #444; }
    .lights { position: absolute; left: 11px; top: 7px; display: flex; gap: 11px; }
    .light { appearance: none; width: 16px; height: 16px; padding: 0; border: 1px solid #0002; border-radius: 50%; background: #f4be50; }
    .shut { background: radial-gradient(circle, #7a0c08 0 2px, #ec6a5e 3px); }
    .max { background: #62c554; }
    .work { flex: 1; display: grid; grid-template-columns: minmax(0, 79fr) minmax(0, 161fr); min-height: 0; }
    .docks { display: flex; flex-direction: column; border-right: 2px solid #8d8f96; min-width: 0; }
    .tabs { display: flex; height: 28px; padding-top: 1px; box-sizing: border-box; }
    .rail { flex: 209 1 0; margin: 13px 4px 0 0; background: #e4e4e4; border-radius: 5px 5px 0 0; }
    .rail.end { flex-basis: 0; flex-grow: 207; margin: 13px 0 0 4px; }
    .tab { appearance: none; border: 0; padding: 0 4px 0 0; width: 79px; font: inherit; color: #1c1c1c; background: #fff; border-radius: 7px 0 0 7px; box-shadow: 0 1px 1px #0003; }
    .tab.on { width: 134px; color: #fff; background: linear-gradient(#2a90ff, #057bff); border-radius: 0 7px 7px 0; display: flex; align-items: center; gap: 7px; padding: 0 0 0 16px; }
    .pencil { width: 22px; height: 22px; }
    .dock-title { display: flex; align-items: center; height: 25px; padding: 0 1px 0 8px; }
    .dock-title.tall { height: 28px; padding-bottom: 1px; box-sizing: border-box; }
    .dock-title h2 { flex: 1; margin: 0; font-size: 17px; line-height: 20px; font-weight: 400; text-align: center; }
    .wins { display: flex; gap: 11px; }
    .win { appearance: none; width: 21px; height: 21px; padding: 1px; border: 1px solid #979797; background: #f2f2f2; display: block; }
    .win svg { display: block; width: 100%; height: 100%; }
    .tasks { height: 105px; box-sizing: border-box; border: 2px solid #b9bbbe; border-top-width: 3px; background: #d8dde4; overflow: hidden; display: flex; flex-direction: column; align-items: center; padding-top: 26px; }
    .solver { align-self: stretch; flex: none; display: flex; align-items: flex-start; gap: 4px; margin-top: 33px; padding-left: 18px; font-size: 14px; line-height: 18px; font-weight: 600; color: #8790ac; }
    .solver svg { width: 20px; height: 20px; flex: none; }
    .solver span { padding-top: 3px; }
    .push { appearance: none; height: 27px; min-width: 68px; padding: 0 18px; border: 0; border-radius: 6px; background: #fff; box-shadow: 0 0 1px 1px #0001, 0 1px 2px #0004; font: inherit; color: #111; flex: none; }
    .push:disabled { color: #b4b4b4; background: #f0f0f0; }
    .clip { flex: 1; padding: 7px 15px 14px 16px; display: flex; flex-direction: column; }
    .check { display: flex; align-items: center; height: 18px; gap: 4px; padding-left: 11px; font-size: 15px; line-height: 18px; }
    .group + .check { margin-top: 15px; }
    .box { appearance: none; width: 13px; height: 13px; margin: 0; border-radius: 3px; background: #fff; box-shadow: 0 0 0 1px #0002; flex: none; }
    .box:checked { box-shadow: none; background: #0f7fff; }
    .tick { position: relative; display: flex; }
    .tick svg { position: absolute; left: 0; top: 0; width: 13px; height: 13px; pointer-events: none; }
    .group { box-sizing: border-box; min-height: 80px; border: 1px solid #dcdcdc; border-radius: 6px; background: #e4e4e4; padding: 1px 20px 0 19px; display: flex; flex-direction: column; justify-content: center; }
    .row { display: flex; align-items: center; gap: 13px; }
    .row .push { margin-left: auto; }
    .word { width: 51px; }
    .dim { color: #b4b4b4; }
    .custom { padding: 20px 20px 18px 19px; }
    .custom > .row { padding-left: 14px; height: 28px; }
    .adjust { display: flex; align-items: center; gap: 6px; height: 20px; margin-top: 18px; }
    .adjust .box { width: 18px; height: 18px; background: #efefef; }
    .legend { font-size: 15px; line-height: 16px; padding: 6px 0 0 9px; }
    .inner { box-sizing: border-box; height: 70px; border: 1px solid #d3d3d3; border-radius: 6px; background: #dcdcdc; padding: 0 21px 0 22px; display: flex; align-items: center; gap: 17px; }
    .foot { display: flex; justify-content: flex-end; padding: 18px 1px 0 0; margin-top: auto; }
    .canvas { display: flex; flex-direction: column; min-width: 0; }
    .canvas model-view { flex: 1; }
    .docs { display: flex; height: 27px; }
    .docs .rail { flex: 475 1 0; margin: 0 4px 14px 0; border-radius: 0 0 5px 5px; }
    .docs .rail.end { flex: 475 1 0; margin: 0 0 14px 4px; }
    .doc { display: flex; align-items: center; width: 97px; box-sizing: border-box; padding-left: 6px; gap: 9px; background: #fff; border-radius: 7px 0 0 7px; }
    .doc.on { width: 240px; padding-left: 10px; gap: 12px; background: linear-gradient(#2a90ff, #057bff); border-radius: 0 7px 7px 0; color: #fff; }
    .doc button { appearance: none; border: 0; background: none; padding: 0; font: inherit; color: inherit; display: flex; align-items: center; gap: 12px; }
    .doc.on .name { padding-left: 8px; }
    .x { width: 12px; height: 12px; }
    .file { width: 16px; height: 20px; }
    .status { height: 54px; box-sizing: border-box; border-top: 2px solid #b2b2b2; background: linear-gradient(#ececec, #b4b4b4); display: flex; align-items: center; padding: 0 50px 0 3px; }
    .nav { appearance: none; border: 0; background: none; padding: 0; font: inherit; color: inherit; margin-left: auto; display: flex; align-items: center; gap: 10px; }
    .nav svg { width: 18px; height: 18px; }
    .size { padding-left: 78px; }
  `;

  private wins() {
    return html`<span class="wins">
      <button class="win" aria-label="Collapse"><svg viewBox="0 0 17 17"><path d="M1.500 1.500H15.500V15.500H1.500ZM1.500 6.500H15.500" fill="none" stroke="#777" stroke-width="2"/></svg></button>
      <button class="win" aria-label="Float"><svg viewBox="0 0 17 17"><path d="M6 5V1.500H15.500V10.500H11M1.500 6.500H10.500V15.500H1.500Z" fill="none" stroke="#777" stroke-width="2"/></svg></button>
    </span>`;
  }

  private clip(axis: string, on: boolean) {
    return html`<label class="check"><span class="tick"><input class="box" type="checkbox" .checked=${on}>${on ? html`<svg viewBox="0 0 13 13"><path d="M3.500 7L5.500 9.500L9.500 3.500" fill="none" stroke="#fff" stroke-width="2" stroke-linecap="round"/></svg>` : nothing}</span>Clipping ${axis}</label>
      <div class="group"><div class="row ${on ? "" : "dim"}"><span class="word">Offset</span><spin-box label="Clipping ${axis} offset" ?off=${!on}></spin-box><button class="push" ?disabled=${!on}>Flip</button></div></div>`;
  }

  render() {
    return html`<div class="window">
      <header class="title">
        <div class="lights"><button class="light shut" aria-label="Close window"></button><button class="light" aria-label="Minimize"></button><button class="light max" aria-label="Zoom"></button></div>
        <h1>smars_base - FreeCAD 1.0.2</h1>
      </header>
      ${TOOLBARS.map((items) => html`<tool-strip .items=${items}></tool-strip>`)}
      <main class="work">
        <aside class="docks">
          <div class="tabs">
            <span class="rail"></span>
            <button class="tab">Model</button>
            <button class="tab on"><svg class="pencil" viewBox="0 0 22 22"><path d="M1 5L6 1L18 13L20 21L13 18Z" fill="#33567f" stroke="#0b1a30" stroke-width="1.500"/><path d="M3 4L15 16M5 2L17 14" stroke="#0b1a30"/><path d="M13 18L18 13L20 21Z" fill="#fff" stroke="#0b1a30"/><path d="M17 20L20 17V21Z" fill="#111"/></svg>Tasks</button>
            <span class="rail end"></span>
          </div>
          <div class="dock-title"><h2>Tasks</h2>${this.wins()}</div>
          <section class="tasks">
            <button class="push">Close</button>
            <div class="solver"><svg viewBox="0 0 60 60">${sketchMark}</svg><span>Solver messages</span></div>
          </section>
          <div class="dock-title tall"><h2>Clipping</h2>${this.wins()}</div>
          <section class="clip">
            ${this.clip("X", false)}${this.clip("Y", true)}${this.clip("Z", false)}
            <label class="check"><input class="box" type="checkbox">Clipping custom direction</label>
            <div class="group custom">
              <div class="row dim"><span class="word">Offset</span><spin-box label="Custom offset" off></spin-box><button class="push" disabled>View</button></div>
              <label class="adjust dim"><input class="box" type="checkbox" disabled>Adjust to view direction</label>
              <div class="legend dim">Direction</div>
              <div class="inner"><spin-box label="Direction x" off></spin-box><spin-box label="Direction y" off></spin-box><spin-box label="Direction z" value="1.00" off></spin-box></div>
            </div>
            <div class="foot"><button class="push">Close</button></div>
          </section>
        </aside>
        <section class="canvas">
          <model-view></model-view>
          <nav class="docs">
            <span class="rail"></span>
            <div class="doc"><button aria-label="Close Start"><svg class="x" viewBox="0 0 12 12"><path d="M1 1L11 11M11 1L1 11" stroke="#555" stroke-width="1.500"/></svg></button><button>Start</button></div>
            <div class="doc on"><button aria-label="Close smars_base"><svg class="x" viewBox="0 0 12 12"><path d="M1 1L11 11M11 1L1 11" stroke="#fff" stroke-width="1.500"/></svg></button>
              <button class="name"><svg class="file" viewBox="0 0 16 20"><path d="M1 1H12L15 4V19H1Z" fill="#f4f4f4" stroke="#444"/><path d="M7 6L11 3L14 6V11L10 13Z" fill="#e0151a" stroke="#500"/><path d="M3 9L7 6L11 9V14L7 17L3 14Z" fill="#34619f" stroke="#0d2547"/></svg>smars_bas...</button></div>
            <span class="rail end"></span>
          </nav>
        </section>
      </main>
      <footer class="status">
        <span>Preselected: smars_base.Body.Pad002.Edge58 (-34.36 mm, 25.00 mm, 1.87 mm)</span>
        <button class="nav"><svg viewBox="0 0 18 18"><path d="M3.500 1H14.500Q17 1 17 3.500V14.500Q17 17 14.500 17H3.500Q1 17 1 14.500V3.500Q1 1 3.500 1ZM1 11.500H17M9 11.500V17" fill="none" stroke="#222" stroke-width="1.800"/></svg>Touchpad</button>
        <span class="size">79.71 mm x 48.35 mm</span>
      </footer>
    </div>`;
  }
}
